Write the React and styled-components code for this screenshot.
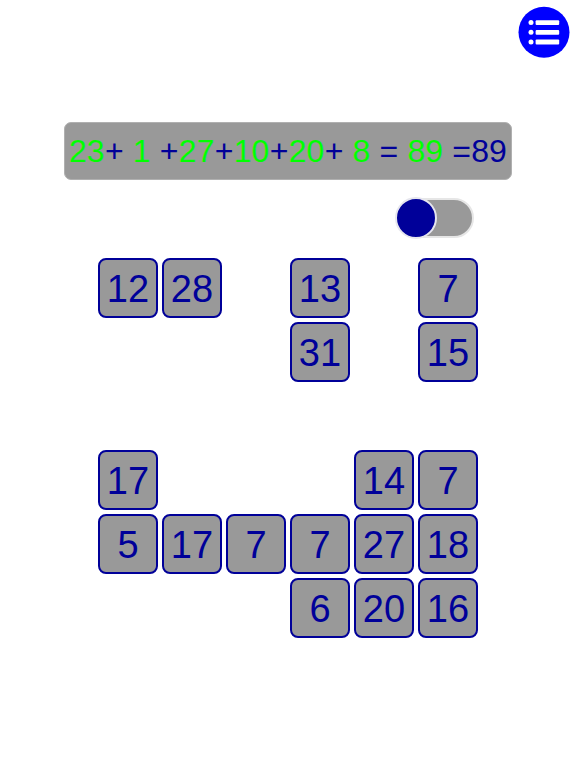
import React, { useState } from 'react';
import styled, { createGlobalStyle } from 'styled-components';

const GlobalStyle = createGlobalStyle`
  *, *::before {
    box-sizing: border-box;
  }

  body {
    margin: 0;
    background: white;
    color: #000099;
    font-family: "Liberation Sans", Arial, sans-serif;
  }
`

const Page = styled.div`
  display: flex;
  flex-direction: column;
  align-items: center;
`

const Header = styled.header`
  align-self: stretch;
  display: flex;
  justify-content: flex-end;
  padding: 6px;
`

const MenuButton = styled.button`
  width: 52px;
  height: 52px;
  padding: 0;
  border: none;
  background: none;
  cursor: pointer;

  svg {
    display: block;
  }
`

const Game = styled.main`
  width: 100%;
  max-width: 448px;
  padding-top: 58px;
`

const Equation = styled.div`
  display: flex;
  justify-content: space-between;
  align-items: center;
  height: 58px;
  padding: 0 4px;
  border: 1px solid #b0b0b0;
  border-radius: 7px;
  background: #999999;
  font-size: 32px;
  white-space: pre;
`

const Term = styled.span`
  color: ${props => props.$used ? '#00ff00' : '#000099'};
`

const Options = styled.div`
  display: flex;
  justify-content: flex-end;
  padding: 18px 38px 0 0;
`

const Switch = styled.input`
  appearance: none;
  display: flex;
  align-items: center;
  justify-content: ${props => props.checked ? 'flex-end' : 'flex-start'};
  width: 78px;
  height: 40px;
  margin: 0;
  border: 2px solid #e6e6e6;
  border-radius: 20px;
  background: #999999;
  cursor: pointer;

  &::before {
    content: '';
    flex: none;
    width: 42px;
    height: 42px;
    margin: 0 -3px;
    border: 2px solid #e6e6ee;
    border-radius: 50%;
    background: #000099;
  }
`

const Board = styled.div`
  display: grid;
  grid-template-columns: repeat(6, 60px);
  grid-auto-rows: 60px;
  gap: 4px;
  justify-content: center;
  padding-top: 20px;
`

const Tile = styled.button`
  padding: 2px 0 0;
  border: 2px solid #000099;
  border-radius: 8px;
  background: #999999;
  color: #000099;
  font-family: inherit;
  font-size: 38px;
  line-height: 54px;
  cursor: pointer;
`

const terms = [
  { text: '23', used: true },
  { text: '+' },
  { text: ' 1 ', used: true },
  { text: '+' },
  { text: '27', used: true },
  { text: '+' },
  { text: '10', used: true },
  { text: '+' },
  { text: '20', used: true },
  { text: '+' },
  { text: ' 8 ', used: true },
  { text: '=' },
  { text: ' 89 ', used: true },
  { text: '=' },
  { text: '89' },
]

// 0 is a cell that has already been cleared
const cells = [
  12, 28, 0, 13, 0, 7,
  0, 0, 0, 31, 0, 15,
  0, 0, 0, 0, 0, 0,
  17, 0, 0, 0, 14, 7,
  5, 17, 7, 7, 27, 18,
  0, 0, 0, 6, 20, 16,
]

function MenuIcon() {
  return (
    <svg width="52" height="52" viewBox="0 0 52 52" aria-hidden="true">
      <circle cx="26" cy="26.3" r="25.5" fill="#0000ff" />
      {[16.6, 26.3, 36].map((y) => (
        <g key={y} fill="white">
          <circle cx="13" cy={y} r="2.5" />
          <rect x="17.6" y={y - 2.4} width="23.6" height="4.8" rx="1" />
        </g>
      ))}
    </svg>
  );
}

export default function App() {

  const [checked, setChecked] = useState(false);

  return (
    <Page>
      <GlobalStyle />
      <Header>
        <MenuButton aria-label="Menu"><MenuIcon /></MenuButton>
      </Header>
      <Game>
        <Equation>
          {terms.map((t, i) => (
            <Term key={i} $used={t.used}>{t.text}</Term>
          ))}
        </Equation>
        <Options>
          <Switch
            type="checkbox"
            role="switch"
            aria-label="Mode"
            checked={checked}
            onChange={(e) => setChecked(e.target.checked)}
          />
        </Options>
        <Board>
          {cells.map((n, i) => n ? <Tile key={i}>{n}</Tile> : <span key={i} />)}
        </Board>
      </Game>
    </Page>
  );
}
